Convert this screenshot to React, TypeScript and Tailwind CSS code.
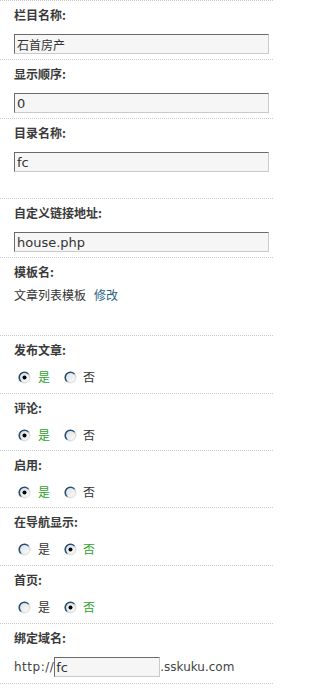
import React from "react";

const CJK = { fontFamily: '"Noto Sans CJK SC", "DejaVu Sans", sans-serif' };
const LAT = { fontFamily: '"DejaVu Sans", "Noto Sans CJK SC", sans-serif' };

function Radio({ checked, id }: { checked: boolean; id: string }) {
  return (
    <svg width="13" height="13" viewBox="0 0 13 13" className="shrink-0">
      <defs>
        <linearGradient id={`s${id}`} x1="0" y1="0" x2="1" y2="1">
          <stop offset="0" stopColor="#1b3f60" />
          <stop offset="0.45" stopColor="#2a5a80" />
          <stop offset="0.6" stopColor="#d6d6d6" />
          <stop offset="1" stopColor="#f0f0f0" />
        </linearGradient>
        <linearGradient id={`f${id}`} x1="0" y1="0" x2="1" y2="1">
          <stop offset="0" stopColor="#dcdcdc" />
          <stop offset="1" stopColor="#ffffff" />
        </linearGradient>
      </defs>
      <circle cx="6.5" cy="6.5" r="5.3" fill={`url(#f${id})`} stroke={`url(#s${id})`} strokeWidth="1.6" />
      {checked && <circle cx="6.5" cy="6.5" r="2" fill="#000" />}
    </svg>
  );
}

function Label({ children }: { children: React.ReactNode }) {
  return (
    <div className="h-[14px] leading-[14px] text-[12px] font-bold text-[#3a3a3a]" style={CJK}>
      {children}
    </div>
  );
}

function TextInput({ value, cjk }: { value: string; cjk?: boolean }) {
  return (
    <input
      readOnly
      value={value}
      className={`block mt-[12px] w-[255px] h-[20px] bg-[#f6f6f6] border-t border-l border-t-[#6a6a6a] border-l-[#6a6a6a] border-b border-r border-b-[#cacaca] border-r-[#cacaca] pl-[2px] text-[#333] outline-none ${cjk ? "text-[12px]" : "text-[13px]"}`}
      style={LAT}
    />
  );
}

function RadioPair({ yes, id }: { yes: boolean; id: string }) {
  return (
    <div className="mt-[12px] h-[16px] flex items-center text-[12px] pl-[4px]" style={CJK}>
      <Radio checked={yes} id={`${id}a`} />
      <span className={`ml-[7px] ${yes ? "text-[#2ea42e]" : "text-[#333]"}`}>是</span>
      <span className="ml-[14px]">
        <Radio checked={!yes} id={`${id}b`} />
      </span>
      <span className={`ml-[6px] ${!yes ? "text-[#2ea42e]" : "text-[#333]"}`}>否</span>
    </div>
  );
}

const row = "border-t border-dotted border-[#c9c9c9] pl-[14px] pt-[7px]";

export default function App() {
  const radios: [string, boolean, string][] = [
    ["发布文章:", true, "pb-[8px]"],
    ["评论:", true, "pb-[7px]"],
    ["启用:", true, "pb-[7px]"],
    ["在导航显示:", false, "pb-[8px]"],
    ["首页:", false, "pb-[8px]"],
  ];
  return (
    <div className="w-[273px] bg-white">
      <div className={`${row} pb-[5px]`}>
        <Label>栏目名称:</Label>
        <TextInput value="石首房产" cjk />
      </div>
      <div className={`${row} pb-[5px]`}>
        <Label>显示顺序:</Label>
        <TextInput value="0" />
      </div>
      <div className={`${row} pb-[26px]`}>
        <Label>目录名称:</Label>
        <TextInput value="fc" />
      </div>
      <div className={`${row} pb-[5px]`}>
        <Label>自定义链接地址:</Label>
        <TextInput value="house.php" />
      </div>
      <div className={`${row} pb-[33px]`}>
        <Label>模板名:</Label>
        <div className="mt-[9px] h-[14px] leading-[14px] text-[12px] text-[#333]" style={CJK}>
          文章列表模板<span className="ml-[8px] text-[#1f6283]">修改</span>
        </div>
      </div>
      {radios.map(([label, yes, pb], i) => (
        <div key={label} className={`${row} ${pb}`}>
          <Label>{label}</Label>
          <RadioPair yes={yes} id={`r${i}`} />
        </div>
      ))}
      <div className={`${row} pb-[6px] border-b`}>
        <Label>绑定域名:</Label>
        <div className="mt-[12px] h-[20px] flex items-center text-[12px] text-[#444]" style={LAT}>
          <span className="tracking-[0.5px]">http://</span>
          <input
            readOnly
            value="fc"
            className="block w-[106px] h-[20px] bg-[#f6f6f6] border-t border-l border-t-[#6a6a6a] border-l-[#6a6a6a] border-b border-r border-b-[#cacaca] border-r-[#cacaca] pl-[1px] text-[13px] text-[#333] outline-none"
            style={LAT}
          />
          <span>.sskuku.com</span>
        </div>
      </div>
    </div>
  );
}
